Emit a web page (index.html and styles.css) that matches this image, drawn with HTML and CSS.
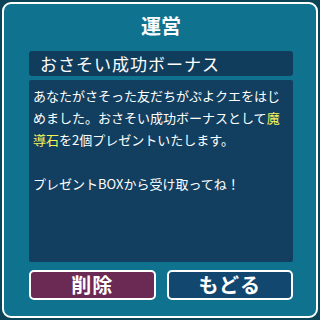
FILE: index.html
```html
<!DOCTYPE html>
<html lang="ja">
<head>
    <meta charset="UTF-8">
    <title>運営</title>
    <link rel="stylesheet" href="styles.css">
</head>
<body>
    <div class="panel">
        <div class="title">運営</div>
        <div class="msg-head">おさそい成功ボーナス</div>
        <div class="msg-body">
            あなたがさそった友だちがぷよクエをはじ<br>
            めました。おさそい成功ボーナスとして<span class="hl">魔</span><br>
            <span class="hl">導石</span>を2個プレゼントいたします。<br>
            <br>
            プレゼントBOXから受け取ってね！
        </div>
        <div class="buttons">
            <button class="btn delete">削除</button>
            <button class="btn back">もどる</button>
        </div>
    </div>
</body>
</html>
```

FILE: styles.css
```css
html, body {
    margin: 0;
    padding: 0;
}
body {
    width: 320px;
    height: 320px;
    background: #0b4457;
    font-family: "Noto Sans CJK JP", "Noto Sans", sans-serif;
    color: #fff;
    overflow: hidden;
}
.panel {
    box-sizing: border-box;
    width: 316px;
    height: 316px;
    margin: 2px;
    padding: 0 23px 15px 25px;
    background: #0f7390;
    border: 2px solid #fff;
    border-radius: 9px;
    display: flex;
    flex-direction: column;
}
.title {
    height: 44px;
    line-height: 44px;
    margin-bottom: 3px;
    text-align: center;
    font-size: 20px;
    font-weight: bold;
}
.msg-head {
    height: 25px;
    line-height: 25px;
    padding-left: 11px;
    background: #113d5c;
    border-radius: 3px;
    font-size: 17px;
    letter-spacing: 1px;
}
.msg-body {
    margin-top: 4px;
    height: 182px;
    box-sizing: border-box;
    padding: 5px 4px;
    background: #123f60;
    border-radius: 2px;
    font-size: 13px;
    line-height: 22px;
    white-space: nowrap;
}
.hl {
    color: #f2f55a;
}
.buttons {
    margin-top: 8px;
    display: grid;
    grid-template-columns: 1fr 1fr;
    gap: 11px;
}
.btn {
    height: 30px;
    border: 2px solid #fff;
    border-radius: 5px;
    color: #fff;
    font-family: inherit;
    font-size: 20px;
    font-weight: bold;
    line-height: 24px;
    padding: 0;
    letter-spacing: 1px;
}
.btn.delete {
    background: #6b2a54;
}
.btn.back {
    background: #12476f;
}
```
